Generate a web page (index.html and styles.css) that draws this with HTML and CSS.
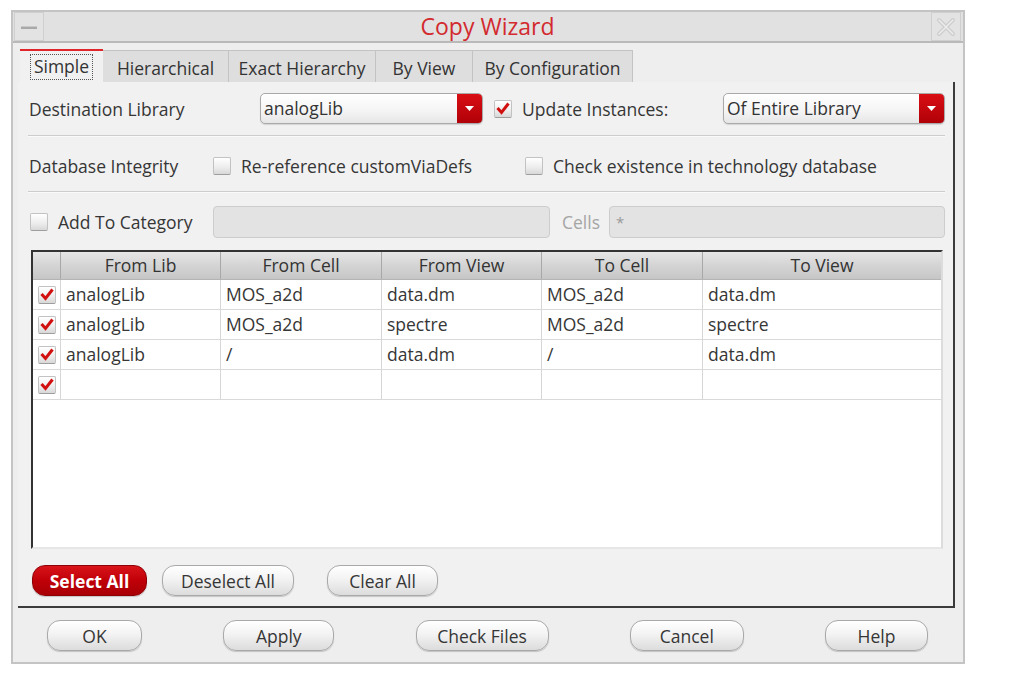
FILE: index.html
```html
<!DOCTYPE html>
<html>
<head>
<meta charset="utf-8">
<link rel="stylesheet" href="styles.css">
</head>
<body>
<div class="window">
  <div class="titlebar">
    <div class="tb-btn min"><span class="dash"></span></div>
    <div class="title">Copy Wizard</div>
    <div class="tb-btn close">
      <svg width="22" height="22" viewBox="0 0 22 22"><path d="M4 4 L18 18 M18 4 L4 18" stroke="#cdcdcd" stroke-width="4" stroke-linecap="round"/><path d="M4 4 L18 18 M18 4 L4 18" stroke="#ececec" stroke-width="1.5" stroke-linecap="round"/></svg>
    </div>
  </div>

  <div class="tabs">
    <div class="tab active"><span class="focus">Simple</span></div>
    <div class="tab t-hier">Hierarchical</div>
    <div class="tab t-exact">Exact Hierarchy</div>
    <div class="tab t-view">By View</div>
    <div class="tab t-conf">By Configuration</div>
  </div>

  <div class="panel">
    <div class="row row1">
      <span class="label w-dest">Destination Library</span>
      <div class="combo c-lib"><span class="combo-text">analogLib</span><span class="combo-btn"><svg width="9" height="6" viewBox="0 0 9 6"><path d="M0 0 H9 L4.5 5 Z" fill="#fff"/></svg></span></div>
      <span class="cb checked ml11"><svg width="14" height="13" viewBox="0 0 14 13"><path d="M1.5 6 L5.5 10.5 L12.5 1.5" fill="none" stroke="#d20f0f" stroke-width="3"/></svg></span>
      <span class="label ml10">Update Instances:</span>
      <div class="combo c-inst"><span class="combo-text">Of Entire Library</span><span class="combo-btn"><svg width="9" height="6" viewBox="0 0 9 6"><path d="M0 0 H9 L4.5 5 Z" fill="#fff"/></svg></span></div>
    </div>
    <div class="sep"></div>
    <div class="row row2">
      <span class="label w-db">Database Integrity</span>
      <span class="group g-reref"><span class="cb"></span><span class="label ml10">Re-reference customViaDefs</span></span>
      <span class="group"><span class="cb"></span><span class="label ml10">Check existence in technology database</span></span>
    </div>
    <div class="sep"></div>
    <div class="row row3">
      <span class="group g-cat"><span class="cb cb-cat"></span><span class="label ml10">Add To Category</span></span>
      <div class="dinput in-cat"></div>
      <span class="label dim cells">Cells</span>
      <div class="dinput in-cells">*</div>
    </div>

    <div class="table">
      <div class="trow thead">
        <div class="cell"></div>
        <div class="cell">From Lib</div>
        <div class="cell">From Cell</div>
        <div class="cell">From View</div>
        <div class="cell">To Cell</div>
        <div class="cell last">To View</div>
      </div>
      <div class="trow">
        <div class="cell ck"><span class="cb checked small"><svg width="14" height="13" viewBox="0 0 14 13"><path d="M1.5 6 L5.5 10.5 L12.5 1.5" fill="none" stroke="#d20f0f" stroke-width="3"/></svg></span></div>
        <div class="cell">analogLib</div>
        <div class="cell">MOS_a2d</div>
        <div class="cell">data.dm</div>
        <div class="cell">MOS_a2d</div>
        <div class="cell last">data.dm</div>
      </div>
      <div class="trow">
        <div class="cell ck"><span class="cb checked small"><svg width="14" height="13" viewBox="0 0 14 13"><path d="M1.5 6 L5.5 10.5 L12.5 1.5" fill="none" stroke="#d20f0f" stroke-width="3"/></svg></span></div>
        <div class="cell">analogLib</div>
        <div class="cell">MOS_a2d</div>
        <div class="cell">spectre</div>
        <div class="cell">MOS_a2d</div>
        <div class="cell last">spectre</div>
      </div>
      <div class="trow">
        <div class="cell ck"><span class="cb checked small"><svg width="14" height="13" viewBox="0 0 14 13"><path d="M1.5 6 L5.5 10.5 L12.5 1.5" fill="none" stroke="#d20f0f" stroke-width="3"/></svg></span></div>
        <div class="cell">analogLib</div>
        <div class="cell">/</div>
        <div class="cell">data.dm</div>
        <div class="cell">/</div>
        <div class="cell last">data.dm</div>
      </div>
      <div class="trow">
        <div class="cell ck"><span class="cb checked small"><svg width="14" height="13" viewBox="0 0 14 13"><path d="M1.5 6 L5.5 10.5 L12.5 1.5" fill="none" stroke="#d20f0f" stroke-width="3"/></svg></span></div>
        <div class="cell"></div>
        <div class="cell"></div>
        <div class="cell"></div>
        <div class="cell"></div>
        <div class="cell last"></div>
      </div>
    </div>

    <div class="row btnrow">
      <button class="btn red b-sel">Select All</button>
      <button class="btn b-desel">Deselect All</button>
      <button class="btn b-clear">Clear All</button>
    </div>
  </div>

  <div class="footer">
    <button class="btn b-ok">OK</button>
    <button class="btn b-apply">Apply</button>
    <button class="btn b-check">Check Files</button>
    <button class="btn b-cancel">Cancel</button>
    <button class="btn b-help">Help</button>
  </div>
</div>
</body>
</html>
```

FILE: styles.css
```css
* { box-sizing: border-box; }
html, body { margin: 0; padding: 0; background: #ffffff; }
body {
  font-family: "Open Sans", "Noto Sans", sans-serif;
  font-size: 17.5px;
  line-height: 22px;
  color: #353535;
}

.window {
  margin: 10px 0 0 11px;
  width: 954px;
  height: 654px;
  border: 2px solid #c4c4c4;
  background: #eeeeee;
  display: flex;
  flex-direction: column;
}

/* Title bar */
.titlebar {
  height: 31px;
  display: flex;
  align-items: stretch;
  background: #e1e1e1;
  border-bottom: 2px solid #b9b9b9;
}
.tb-btn {
  width: 30px;
  display: flex;
  align-items: center;
  justify-content: center;
  border: 1px solid #cfcfcf;
  background: #e3e3e3;
}
.min { margin-left: 1px; }
.dash {
  display: block;
  width: 16px;
  height: 3px;
  background: #a9a9a9;
  border-top: 1px solid #c9c9c9;
  margin-top: 2px;
}
.close { margin-right: 2px; }
.title {
  flex: 1;
  text-align: center;
  color: #d32a2f;
  font-size: 23px;
  line-height: 28px;
}

/* Tabs */
.tabs {
  display: flex;
  margin: 6px 0 0 5px;
  height: 33px;
  align-items: flex-end;
}
.tab {
  height: 32px;
  background: #dedede;
  border: 1px solid #c3c3c3;
  border-bottom: none;
  border-left: none;
  display: flex;
  align-items: center;
  justify-content: center;
  color: #333;
  padding-top: 2px;
  white-space: nowrap;
}
.tab.active {
  width: 83px;
  height: 33px;
  margin-left: 2px;
  background: #f1f1f1;
  border: none;
  border-top: 2px solid #e0262b;
  padding-top: 1px;
}
.focus {
  border: 1px dotted #555;
  padding: 0 3px 1px;
  line-height: 23px;
}
.t-hier { width: 126px; }
.t-exact { width: 147px; }
.t-view { width: 97px; }
.t-conf { width: 160px; }

/* Panel */
.panel {
  margin: 0 8px 0 5px;
  background: #f1f1f1;
  border-right: 2px solid #3b3b3b;
  border-bottom: 2px solid #3b3b3b;
  padding: 11px 8px 10px 11px;
}
.row { display: flex; align-items: center; }
.row1 { height: 31px; }
.row2 { height: 54px; padding-top: 3px; }
.row3 { height: 32px; margin-top: 13px; }
.sep {
  height: 2px;
  margin: 11px 0 0 -1px;
  border-top: 1px solid #cdcdcd;
  border-bottom: 1px solid #fafafa;
}
.row2 + .sep { margin-top: 0; }

.label { white-space: nowrap; color: #363636; }
.dim { color: #a5a5a5; }
.ml10 { margin-left: 10px; }
.ml11 { margin-left: 11px; }
.w-dest { width: 231px; }
.w-db { width: 184px; }
.g-reref { width: 312px; display: flex; align-items: center; }
.group { display: flex; align-items: center; }
.g-cat { width: 184px; }
.cb-cat { margin-left: 1px; }

/* Combo */
.combo {
  height: 31px;
  display: flex;
  border: 1px solid #a9a9a9;
  border-radius: 5px;
  background: linear-gradient(#ffffff, #f4f4f4 60%, #e6e6e6);
  overflow: hidden;
  box-shadow: 0 1px 1px rgba(0,0,0,0.12);
}
.c-lib { width: 223px; }
.c-inst { width: 222px; margin-left: auto; }
.combo-text { flex: 1; padding-left: 3px; line-height: 29px; color: #333; white-space: nowrap; }
.combo-btn {
  width: 25px;
  background: linear-gradient(#d90f14, #b00008);
  display: flex;
  align-items: center;
  justify-content: center;
}

/* Checkbox */
.cb {
  width: 18px;
  height: 18px;
  border: 1px solid #c2c2c2;
  border-bottom-color: #9e9e9e;
  border-radius: 2px;
  background: linear-gradient(#ffffff, #ececec 60%, #d8d8d8);
  display: inline-flex;
  align-items: center;
  justify-content: center;
  flex: none;
}
.cb svg { margin-top: -1px; }

/* Disabled inputs */
.dinput {
  height: 32px;
  background: #e3e3e3;
  border: 1px solid #cdcdcd;
  border-radius: 4px;
  color: #9a9a9a;
  padding: 4px 6px;
  font-size: 15px;
}
.in-cat { width: 337px; }
.cells { margin-left: 12px; width: 47px; }
.in-cells { flex: 1; }

/* Table */
.table {
  margin: 12px 0 0 2px;
  width: 912px;
  height: 299px;
  background: #ffffff;
  border-top: 2px solid #333333;
  border-left: 2px solid #333333;
  border-right: 2px solid #dcdcdc;
  border-bottom: 2px solid #e6e6e6;
}
.trow {
  display: grid;
  grid-template-columns: 28px 160px 161px 160px 161px 1fr;
  height: 30px;
  border-bottom: 1px solid #d9d9d9;
}
.thead {
  height: 28px;
  background: linear-gradient(#e6e6e6, #d4d4d4 50%, #c6c6c6);
  border-bottom: 1px solid #b4b4b4;
}
.cell {
  border-right: 1px solid #d7d7d7;
  padding-left: 5px;
  line-height: 29px;
  white-space: nowrap;
  color: #363636;
}
.thead .cell {
  text-align: center;
  padding-left: 0;
  line-height: 27px;
  border-right: 1px solid #a8a8a8;
  color: #333;
}
.cell.last { border-right: none; }
.cell.ck {
  padding-left: 0;
  display: flex;
  align-items: center;
  justify-content: center;
}

/* Buttons */
.btn {
  font-family: "Open Sans", "Noto Sans", sans-serif;
  font-size: 17.5px;
  line-height: 22px;
  color: #363636;
  height: 31px;
  border: 1px solid #a9a9a9;
  border-radius: 13px;
  background: linear-gradient(#ffffff, #f3f3f3 45%, #dcdcdc);
  box-shadow: 0 1px 1px rgba(0,0,0,0.18);
  padding: 0;
}
.btn.red {
  background: linear-gradient(#d9141a, #c00008 50%, #a80006);
  border-color: #8e0005;
  color: #ffffff;
  font-weight: bold;
}
.btnrow { height: 31px; margin-top: 16px; margin-left: 3px; }
.b-sel { width: 115px; }
.b-desel { width: 132px; margin-left: 15px; }
.b-clear { width: 111px; margin-left: 33px; }

.footer {
  display: flex;
  justify-content: space-between;
  padding: 0 35px 0 34px;
  margin-top: 12px;
}
.b-ok { width: 95px; }
.b-apply { width: 111px; }
.b-check { width: 133px; }
.b-cancel { width: 114px; }
.b-help { width: 103px; }
```
